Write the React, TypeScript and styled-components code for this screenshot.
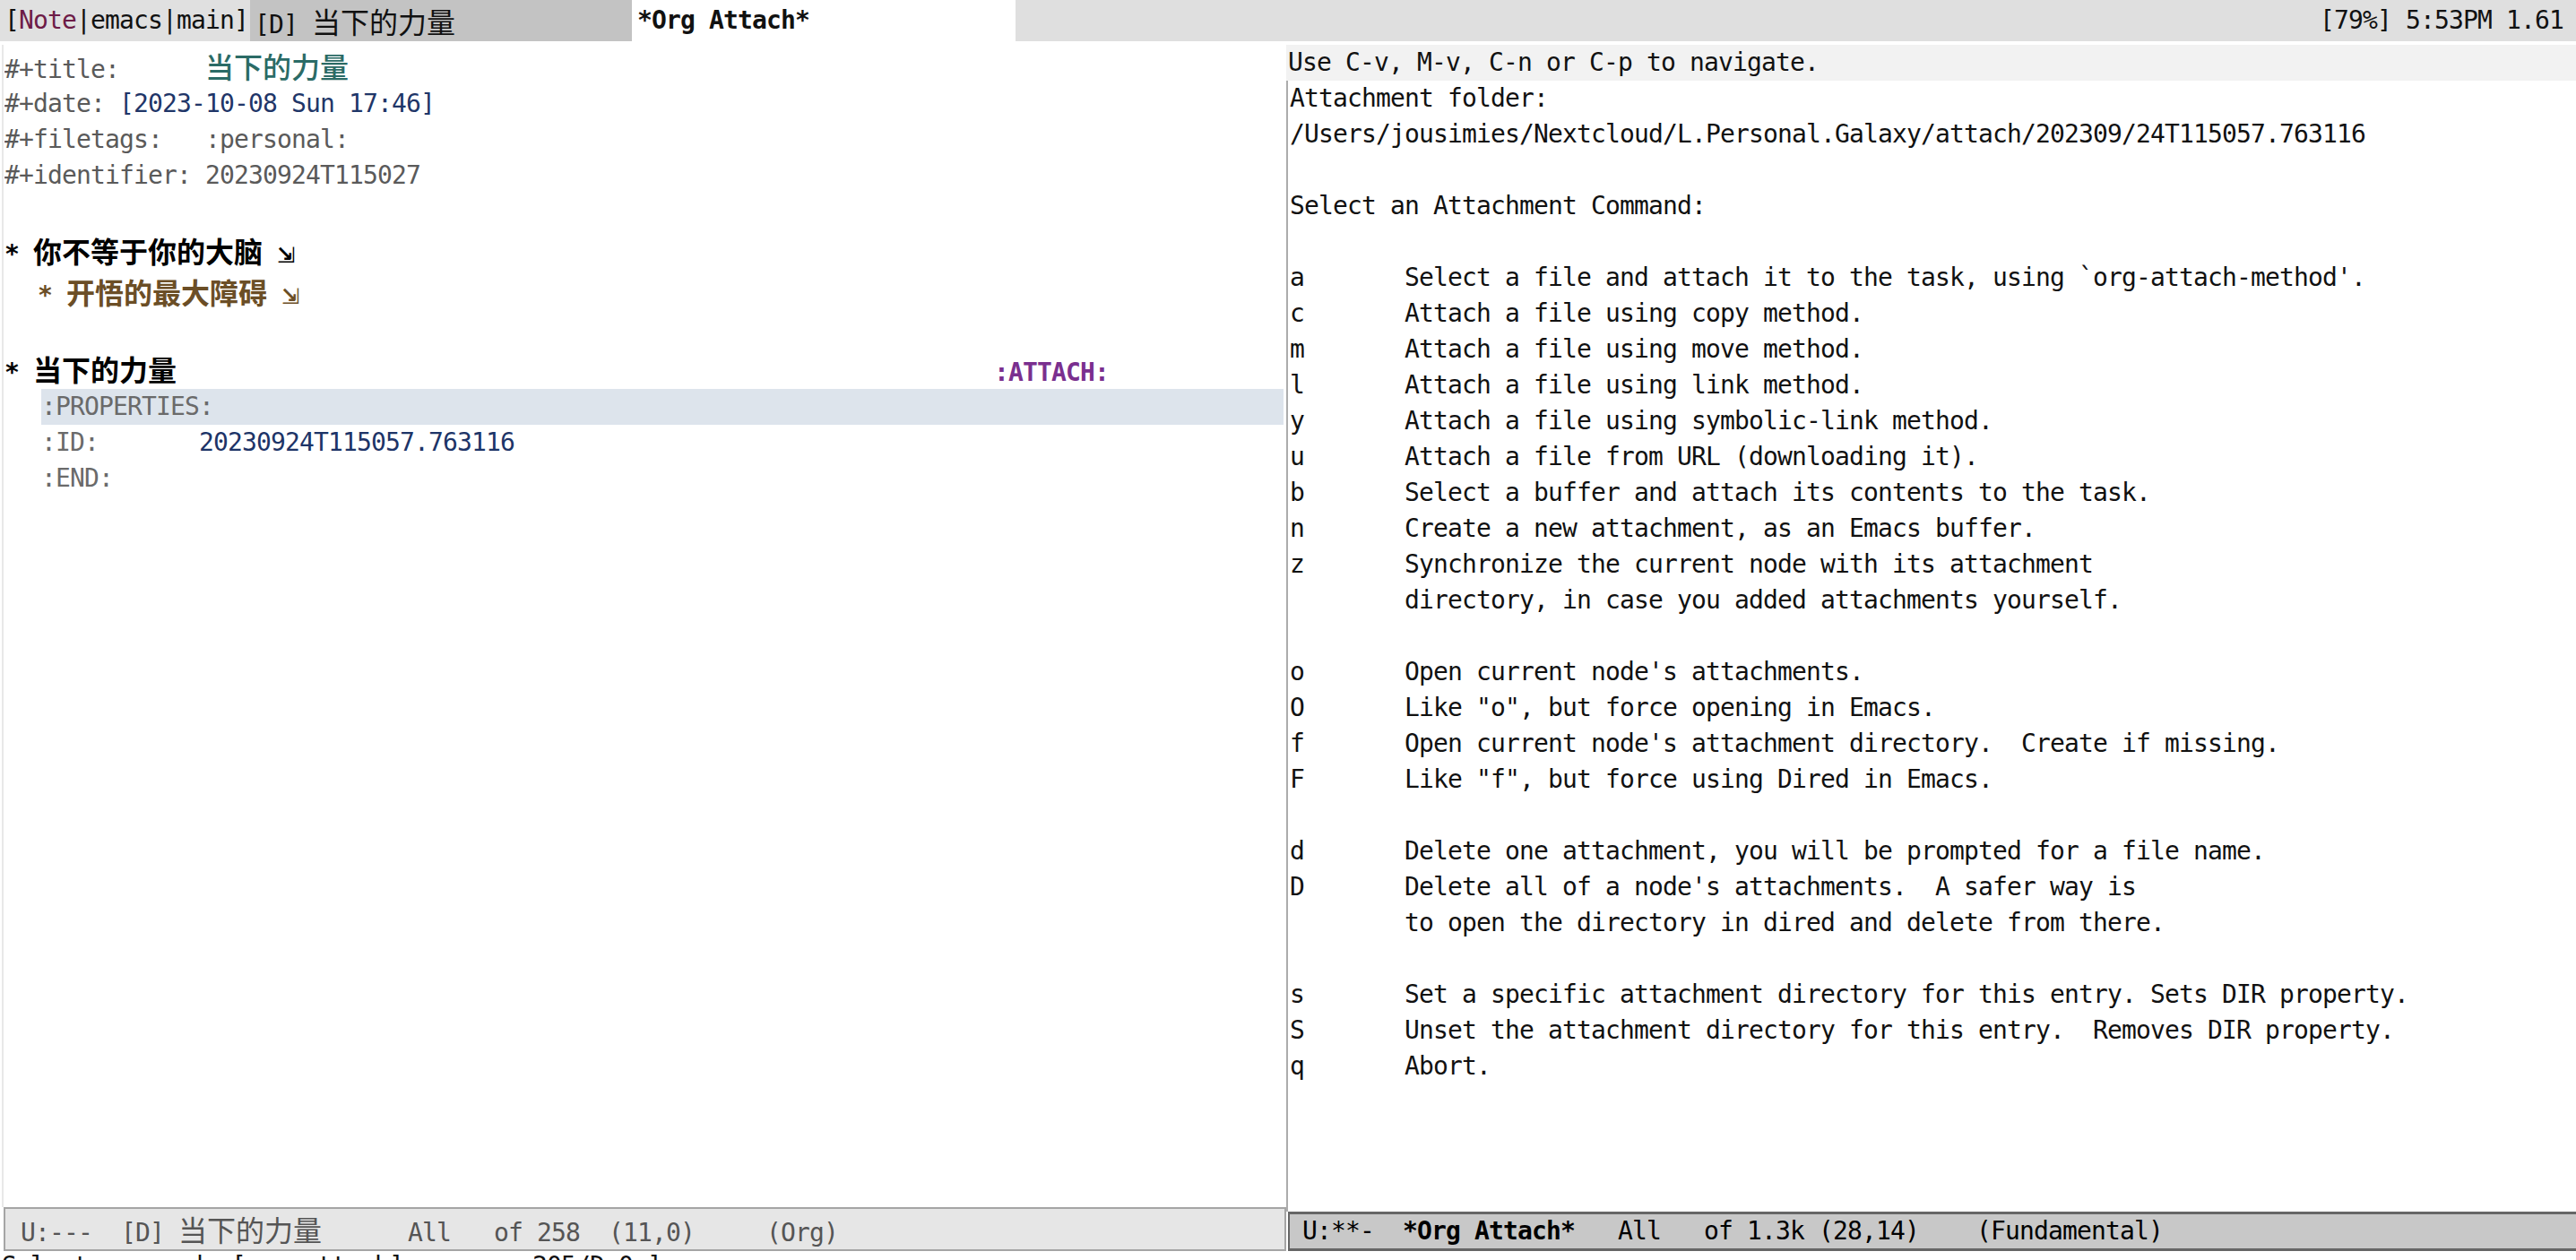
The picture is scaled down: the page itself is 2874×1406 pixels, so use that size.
import React from "react";
import styled, { createGlobalStyle } from "styled-components";

const MONO = `"DejaVu Sans Mono", "Noto Sans CJK SC", monospace`;
const CJK = `"Noto Sans CJK SC", "Noto Sans CJK JP", sans-serif`;

const GlobalStyle = createGlobalStyle`
  html, body { margin: 0; padding: 0; background: #ffffff; overflow: hidden; }
  #root { width: 2874px; height: 1406px; }
`;

const Screen = styled.div`
  width: 2874px;
  height: 1406px;
  display: flex;
  flex-direction: column;
  overflow: hidden;
  background: #ffffff;
  color: #000;
  font-family: ${MONO};
  font-size: 28px;
  letter-spacing: -0.857px;
`;

const TabBar = styled.div`
  display: flex;
  height: 46px;
  line-height: 46px;
  white-space: pre;
  flex: none;
`;

const Tab = styled.div<{ $w?: number; $bg: string; $bold?: boolean; $pad: number }>`
  ${(p) => (p.$w ? `width: ${p.$w}px; flex: none;` : "flex: 1;")}
  background: ${(p) => p.$bg};
  padding-left: ${(p) => p.$pad}px;
  box-sizing: border-box;
  font-weight: ${(p) => (p.$bold ? 700 : 400)};
  color: #111;
  overflow: hidden;
`;

const TabFill = styled.div`
  flex: 1;
  background: #dfdfdf;
  text-align: right;
  padding-right: 14px;
  color: #111;
`;

const Accent = styled.span`
  color: #6d1b47;
`;

const Han = styled.span<{ $weight?: number }>`
  font-family: ${CJK};
  font-size: 32px;
  letter-spacing: 0;
  font-weight: ${(p) => p.$weight ?? 400};
`;

const Frame = styled.div`
  display: flex;
  flex: 1;
  min-height: 0;
  margin-top: 4px;
`;

const LeftWindow = styled.div`
  width: 1435px;
  flex: none;
  display: flex;
  flex-direction: column;
`;

const RightWindow = styled.div`
  flex: 1;
  display: flex;
  flex-direction: column;
  min-width: 0;
`;

const LeftBody = styled.div`
  flex: 1;
  margin-left: 2px;
  border-left: 2px solid #e8e8e8;
  padding-left: 1px;
`;

const HeaderLine = styled.div`
  height: 40px;
  line-height: 40px;
  background: #f2f2f2;
  padding-left: 2px;
  white-space: pre;
  color: #111;
  flex: none;
`;

const RightBody = styled.div`
  flex: 1;
  border-left: 2px solid #acacac;
  padding-left: 2px;
  color: #111;
`;

const Line = styled.div<{ $tall?: boolean; $indent?: number; $bg?: string }>`
  height: ${(p) => (p.$tall ? 46 : 40)}px;
  line-height: ${(p) => (p.$tall ? 46 : 40)}px;
  white-space: pre;
  margin-left: ${(p) => p.$indent ?? 0}px;
  margin-right: ${(p) => (p.$bg ? 3 : 0)}px;
  background: ${(p) => p.$bg ?? "transparent"};
  overflow: hidden;
`;

const Meta = styled.span`
  color: #5a5a5a;
`;

const TitleText = styled(Han)`
  color: #2b6b66;
`;

const DateText = styled.span`
  color: #1f3668;
`;

const Heading = styled.span<{ $color: string }>`
  color: ${(p) => p.$color};
  font-weight: 700;
`;

const Fold = styled.span`
  font-family: "DejaVu Sans", sans-serif;
  font-size: 24px;
  font-weight: 700;
  letter-spacing: 0;
`;

const Tag = styled.span`
  color: #7a2f8f;
  font-weight: 700;
`;

const Drawer = styled.span`
  color: #6a6a6a;
`;

const IdValue = styled.span`
  color: #1d3467;
`;

const Key = styled.span`
  display: inline-block;
  width: 128px;
`;

const ModeLine = styled.div<{ $active?: boolean }>`
  flex: none;
  box-sizing: border-box;
  height: ${(p) => (p.$active ? 44 : 49)}px;
  line-height: ${(p) => (p.$active ? 38 : 45)}px;
  margin-left: ${(p) => (p.$active ? 2 : 4)}px;
  border: 2px solid ${(p) => (p.$active ? "#666666" : "#a5a5a5")};
  border-top-width: ${(p) => (p.$active ? 3 : 2)}px;
  border-bottom-width: ${(p) => (p.$active ? 3 : 2)}px;
  border-right-width: ${(p) => (p.$active ? 0 : 2)}px;
  background: ${(p) => (p.$active ? "#c8c8c8" : "#e6e6e6")};
  color: ${(p) => (p.$active ? "#000" : "#555")};
  padding-left: ${(p) => (p.$active ? 14 : 17)}px;
  white-space: pre;
  overflow: hidden;
`;

const Bold = styled.span`
  font-weight: 700;
`;

const Echo = styled.div`
  flex: none;
  height: 10px;
  line-height: 34px;
  padding-left: 2px;
  white-space: pre;
  overflow: hidden;
  color: #111;
`;

type Cmd = { k?: string; d?: string };

const commands: Cmd[] = [
  { k: "a", d: "Select a file and attach it to the task, using `org-attach-method'." },
  { k: "c", d: "Attach a file using copy method." },
  { k: "m", d: "Attach a file using move method." },
  { k: "l", d: "Attach a file using link method." },
  { k: "y", d: "Attach a file using symbolic-link method." },
  { k: "u", d: "Attach a file from URL (downloading it)." },
  { k: "b", d: "Select a buffer and attach its contents to the task." },
  { k: "n", d: "Create a new attachment, as an Emacs buffer." },
  { k: "z", d: "Synchronize the current node with its attachment" },
  { k: "", d: "directory, in case you added attachments yourself." },
  {},
  { k: "o", d: "Open current node's attachments." },
  { k: "O", d: 'Like "o", but force opening in Emacs.' },
  { k: "f", d: "Open current node's attachment directory.  Create if missing." },
  { k: "F", d: 'Like "f", but force using Dired in Emacs.' },
  {},
  { k: "d", d: "Delete one attachment, you will be prompted for a file name." },
  { k: "D", d: "Delete all of a node's attachments.  A safer way is" },
  { k: "", d: "to open the directory in dired and delete from there." },
  {},
  { k: "s", d: "Set a specific attachment directory for this entry. Sets DIR property." },
  { k: "S", d: "Unset the attachment directory for this entry.  Removes DIR property." },
  { k: "q", d: "Abort." },
];

const OrgBuffer: React.FC = () => (
  <LeftBody>
    <Line $tall>
      <Meta>{"#+title:      "}</Meta>
      <TitleText $weight={500}>当下的力量</TitleText>
    </Line>
    <Line>
      <Meta>{"#+date: "}</Meta>
      <DateText>[2023-10-08 Sun 17:46]</DateText>
    </Line>
    <Line>
      <Meta>{"#+filetags:   :personal:"}</Meta>
    </Line>
    <Line>
      <Meta>{"#+identifier: 20230924T115027"}</Meta>
    </Line>
    <Line />
    <Line $tall>
      <Heading $color="#000">
        {"* "}
        <Han $weight={700}>你不等于你的大脑</Han>
        {" "}
        <Fold>⇲</Fold>
      </Heading>
    </Line>
    <Line $tall $indent={37}>
      <Heading $color="#6b4e26">
        {"* "}
        <Han $weight={700}>开悟的最大障碍</Han>
        {" "}
        <Fold>⇲</Fold>
      </Heading>
    </Line>
    <Line />
    <Line $tall>
      <Heading $color="#000">
        {"* "}
        <Han $weight={700}>当下的力量</Han>
      </Heading>
      {" ".repeat(57)}
      <Tag>:ATTACH:</Tag>
    </Line>
    <Line $indent={41} $bg="#dde4ec">
      <Drawer>:PROPERTIES:</Drawer>
    </Line>
    <Line $indent={41}>
      <Drawer>{":ID:       "}</Drawer>
      <IdValue>20230924T115057.763116</IdValue>
    </Line>
    <Line $indent={41}>
      <Drawer>:END:</Drawer>
    </Line>
  </LeftBody>
);

const AttachBuffer: React.FC = () => (
  <RightBody>
    <Line>Attachment folder:</Line>
    <Line>/Users/jousimies/Nextcloud/L.Personal.Galaxy/attach/202309/24T115057.763116</Line>
    <Line />
    <Line>Select an Attachment Command:</Line>
    <Line />
    {commands.map((c, i) => (
      <Line key={i}>
        {c.d !== undefined && (
          <>
            <Key>{c.k}</Key>
            {c.d}
          </>
        )}
      </Line>
    ))}
  </RightBody>
);

export default function App() {
  return (
    <>
      <GlobalStyle />
      <Screen>
        <TabBar>
          <Tab $w={279} $bg="#e0e0e0" $pad={5}>
            [<Accent>Note</Accent>|emacs|main]
          </Tab>
          <Tab $w={426} $bg="#c3c3c3" $pad={5}>
            {"[D] "}
            <Han>当下的力量</Han>
          </Tab>
          <Tab $w={428} $bg="#ffffff" $pad={6} $bold>
            *Org Attach*
          </Tab>
          <TabFill>[79%] 5:53PM 1.61</TabFill>
        </TabBar>
        <Frame>
          <LeftWindow>
            <OrgBuffer />
            <ModeLine>
              {"U:---  [D] "}
              <Han>当下的力量</Han>
              {"      All   of 258  (11,0)     (Org)"}
            </ModeLine>
          </LeftWindow>
          <RightWindow>
            <HeaderLine>Use C-v, M-v, C-n or C-p to navigate.</HeaderLine>
            <AttachBuffer />
            <ModeLine $active>
              {"U:**-  "}
              <Bold>*Org Attach*</Bold>
              {"   All   of 1.3k (28,14)    (Fundamental)"}
            </ModeLine>
          </RightWindow>
        </Frame>
        <Echo>Select command: [org-attach]         205/D 0 ]</Echo>
      </Screen>
    </>
  );
}
